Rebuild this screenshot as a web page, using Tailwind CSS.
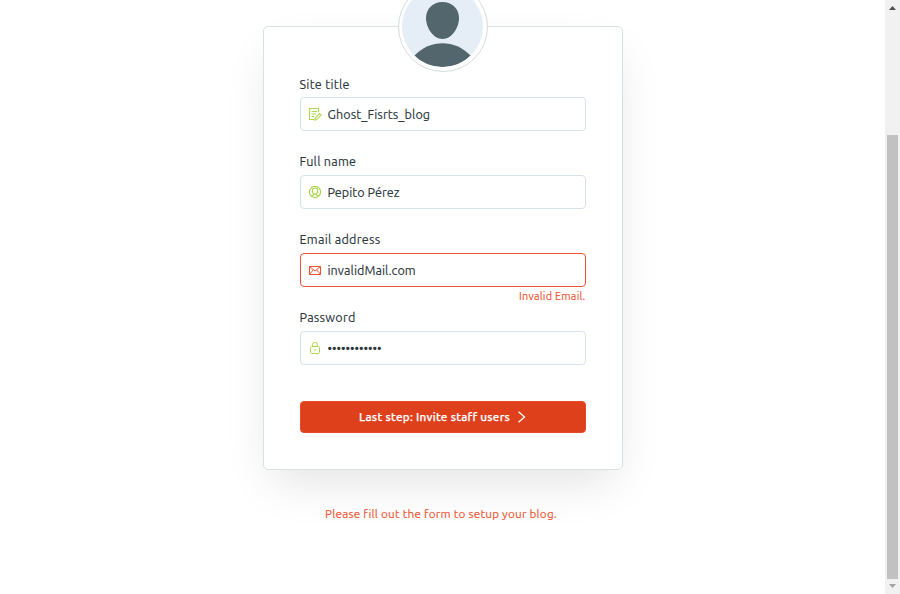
<!DOCTYPE html>
<html lang="en">
<head>
<meta charset="utf-8">
<title>Setup your blog</title>
<script src="https://cdn.jsdelivr.net/npm/@tailwindcss/browser@4"></script>
</head>
<body class="h-[594px] overflow-hidden bg-white font-['Ubuntu','Noto_Sans','Open_Sans',sans-serif] text-[#2b363b] [-webkit-text-stroke:0.12px_currentColor]">
<div class="flex h-full">
  <main class="flex flex-1 flex-col items-center pt-[26px]">
    <form class="relative h-[444px] w-[360px] rounded-[5px] border border-[#dae1e3] bg-white px-[36px] pt-[48px] shadow-[0_20px_45px_-10px_rgba(0,0,0,0.12)]">
      <div class="absolute -top-[45px] left-[134px] size-[90px] rounded-full border border-[#d5dcdd] bg-white p-[3px]">
        <svg class="size-[81px] rounded-full bg-[#e5eef6]" viewBox="0 0 81 81">
          <g fill="#54666d"><path d="M40.500 16C50.500 16 57 23 57 32C57 42 49.500 53 40.500 53C31.500 53 24 42 24 32C24 23 30.500 16 40.500 16Z"/><path d="M12.500 69.500C28 53 53 53 68.500 69.500C54 85 27 85 12.500 69.500Z"/></g>
        </svg>
      </div>
      <div class="h-[78px]">
        <label class="block h-[22px] text-[12.6px] leading-[19px] tracking-[0.26px]">Site title</label>
        <div class="flex h-[34px] items-center rounded-[4px] border border-[#d6e3eb] pl-[8px] text-[12.6px] tracking-[0.08px]">
          <svg class="mr-[6px] size-[13px] shrink-0" viewBox="0 0 13 13" fill="none" stroke="#b0da4b" stroke-width="1.100"><path d="M9.500 4V.500H.500V11.500H5M2.500 3.500H8M2.500 6H7M2.500 8.500H5"/><path d="M5.700 12.200L6.500 9.500L10.500 5.500L12.100 7.100L8.200 11.100Z"/></svg>
          <span>Ghost_Fisrts_blog</span>
        </div>
      </div>
      <div class="h-[78px]">
        <label class="block h-[22px] text-[12.6px] leading-[17px] tracking-[0.24px]">Full name</label>
        <div class="flex h-[34px] items-center rounded-[4px] border border-[#d6e3eb] pl-[8px] text-[12.6px] tracking-[0.04px]">
          <svg class="mr-[6px] size-[13px] shrink-0" viewBox="0 0 13 13" fill="none" stroke="#a9d648" stroke-width="1.100"><circle cx="6" cy="6" r="5.600"/><path d="M6 2C7.800 2 8.700 3.300 8.700 4.800C8.700 6.600 7.600 8 6 8S3.300 6.600 3.300 4.800C3.300 3.300 4.200 2 6 2ZM2 10L4.600 8.900V7.600M7.400 7.600V8.900L10 10"/></svg>
          <span>Pepito Pérez</span>
        </div>
      </div>
      <div class="h-[78px]">
        <label class="block h-[22px] text-[12.6px] leading-[17px] tracking-[0.26px]">Email address</label>
        <div class="flex h-[34px] items-center rounded-[4px] border border-[#f05230] pl-[8px] text-[12.6px] tracking-[0.05px]">
          <svg class="mr-[6px] size-[13px] shrink-0" viewBox="0 0 13 13" fill="none" stroke="#f05230"><path d="M.500 2.500H11.500V10.500H.500ZM.500 2.500L6 7L11.500 2.500M.500 10.500L4.200 6M11.500 10.500L7.800 6"/></svg>
          <span>invalidMail.com</span>
        </div>
        <p class="text-right text-[10.8px] leading-[18px] tracking-[0.24px] text-[#f05230]">Invalid Email.</p>
      </div>
      <div class="h-[78px]">
        <label class="block h-[22px] text-[12.6px] leading-[17px] tracking-[0.24px]">Password</label>
        <div class="flex h-[34px] items-center rounded-[4px] border border-[#d6e3eb] pl-[8px] text-[12.5px]">
          <svg class="mr-[6px] size-[13px] shrink-0" viewBox="0 0 13 13" fill="none" stroke="#b0da4b"><rect x="1.500" y="4.500" width="9" height="7" rx="1"/><path d="M3.500 4.500V2.800A2.500 2.300 0 0 1 8.500 2.800V4.500M6 7V9"/></svg>
          <span>••••••••••••</span>
        </div>
      </div>
      <button type="button" class="mt-[14px] flex h-[32px] w-[286px] items-center justify-center rounded-[4px] border border-[#e8492a] bg-[#df401c] text-[11.7px] font-medium tracking-[0.26px] text-white [-webkit-text-stroke:0.25px_currentColor]"><span>Last step: Invite staff users</span>
        <svg class="ml-[7px] h-[12px] w-[9px]" viewBox="0 0 9 12" fill="none" stroke="white" stroke-width="1.300"><path d="M1.500 .700L7.500 6L1.500 11.300"/></svg>
      </button>
    </form>
    <p class="mr-[3px] mt-[35px] text-[11.7px] leading-[18px] tracking-[0.23px] text-[#f05230]">Please fill out the form to setup your blog.</p>
  </main>
  <aside class="flex w-[15px] flex-col items-center bg-[#f1f1f1]">
    <svg class="h-[15px] w-[15px]" viewBox="0 0 15 15" fill="#505050"><path d="M4 10H11L7.500 6Z"/></svg>
    <div class="mt-[120px] h-[444px] w-[11px] bg-[#c1c1c1]"></div>
    <svg class="h-[15px] w-[15px]" viewBox="0 0 15 15" fill="#a3a3a3"><path d="M4 5H11L7.500 9Z"/></svg>
  </aside>
</div>
</body>
</html>
